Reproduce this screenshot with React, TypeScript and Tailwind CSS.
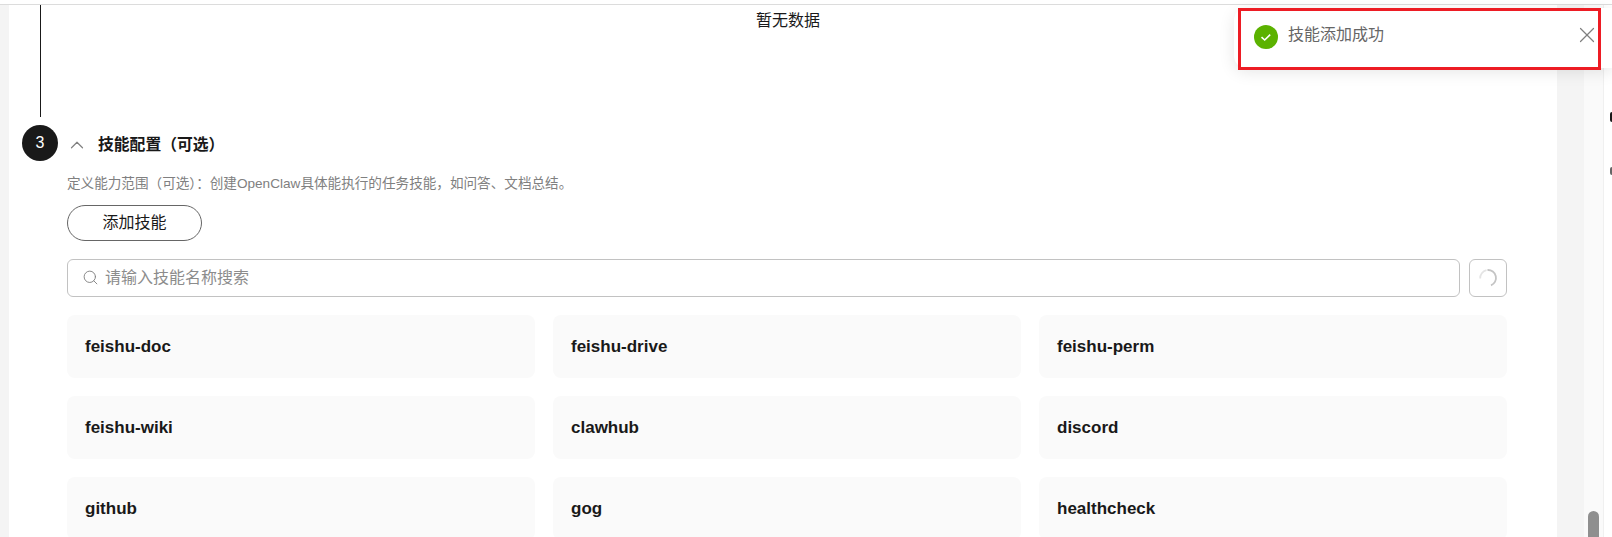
import { useState } from 'react';
import { ChevronUp, Search, X } from 'lucide-react';

const skills = [
  'feishu-doc',
  'feishu-drive',
  'feishu-perm',
  'feishu-wiki',
  'clawhub',
  'discord',
  'github',
  'gog',
  'healthcheck',
];

const Toast = ({ onClose }: { onClose: () => void }) => (
  <div className="absolute left-[1234px] top-[8px] z-10 h-[60px] w-[378px] rounded-l-xl bg-white shadow-[0_4px_16px_rgba(0,0,0,0.1)]">
    <div className="flex h-full items-start pl-[20px] pr-[12px] pt-[17px]">
      <span className="flex h-6 w-6 shrink-0 items-center justify-center rounded-full bg-[#5bb200]">
        <svg width="14" height="14" viewBox="0 0 14 14" fill="none">
          <path d="M2.5 7.2 5.7 10 11.2 4.6" stroke="#fff" strokeWidth="1.6" />
        </svg>
      </span>
      <span className="-mt-px ml-[10px] flex-1 text-[16px] leading-[22px] text-[#666]">技能添加成功</span>
      <button aria-label="关闭" onClick={onClose} className="-mt-[3px] text-[#808080]">
        <X size={26} strokeWidth={1.1} />
      </button>
    </div>
    {/* red annotation box drawn on top of the toast */}
    <div className="pointer-events-none absolute left-[4px] top-0 h-[62px] w-[363px] border-[3px] border-[#ed1c24]" />
  </div>
);

export default function App() {
  const [query, setQuery] = useState('');
  const [toastOpen, setToastOpen] = useState(true);

  return (
    <div className="relative h-[537px] w-full overflow-hidden bg-white font-['Liberation_Sans','Noto_Sans_CJK_SC',sans-serif]">
      {toastOpen && <Toast onClose={() => setToastOpen(false)} />}
      <div className="h-[5px] border-b border-[#dcdcdc]" />
      <div className="flex h-[532px]">
        <div className="w-[9px] shrink-0 bg-[#f4f4f4]" />
        <main className="relative w-[1548px] shrink-0 overflow-hidden bg-white">
          <p className="ml-[747px] h-[128px] pt-[6px] text-[16px] leading-[20px] text-[#191919]">暂无数据</p>
          <div className="absolute left-[31px] top-0 h-[112px] w-px bg-[#191919]" />
          <div className="absolute left-[13px] top-[120px] flex h-9 w-9 items-center justify-center rounded-full bg-[#191919] text-[16px] text-white">
            3
          </div>
          <section className="pl-[58px] pr-[50px]">
            <div className="flex h-6 items-center">
              <ChevronUp size={22} strokeWidth={1.3} className="-ml-px text-[#808080]" />
              <h2 className="ml-[10px] text-[15.8px] font-bold leading-6 text-[#191919]">技能配置（可选）</h2>
            </div>
            <p className="mt-[18px] text-[13.6px] leading-[18px] text-[#808080]">
              定义能力范围（可选）：创建OpenClaw具体能执行的任务技能，如问答、文档总结。
            </p>
            <button className="mt-[12px] block h-9 w-[135px] rounded-full border border-[#666] text-[16px] text-[#191919]">
              添加技能
            </button>
            <div className="mt-[18px] flex gap-[9px]">
              <label className="flex h-[38px] flex-1 items-center rounded-md border border-[#c2c2c2] pl-[14px]">
                <Search size={17} strokeWidth={1.3} className="-mt-[2px] text-[#808080]" />
                <input
                  value={query}
                  onChange={(e) => setQuery(e.target.value)}
                  placeholder="请输入技能名称搜索"
                  className="ml-[6px] flex-1 text-[16px] text-[#191919] outline-none placeholder:text-[#8c8c8c]"
                />
              </label>
              <button aria-label="刷新" className="flex h-[38px] w-[38px] items-center justify-center rounded-md border border-[#c2c2c2]">
                <svg width="20" height="20" viewBox="0 0 20 20" fill="none">
                  <path d="M2.2 10.5A8 8 0 0 1 8.5 2.2" stroke="#e4e4e4" strokeWidth="1.8" />
                  <path d="M9.5 2a8 8 0 0 1 3.5 15.4" stroke="#c4c4c4" strokeWidth="1.8" />
                </svg>
              </button>
            </div>
            <div className="mt-[18px] grid grid-cols-3 gap-x-[18px] gap-y-[18px]">
              {skills.map((name) => (
                <div key={name} className="flex h-[63px] items-center rounded-lg bg-[#fafafa] px-[18px] text-[17px] font-bold text-[#191919]">
                  {name}
                </div>
              ))}
            </div>
          </section>
        </main>
        <div className="w-[27px] shrink-0 bg-[#f4f4f4]" />
        <aside className="relative w-[19px] shrink-0 bg-[#fafafa]">
          <div className="absolute bottom-0 left-[4px] h-[26px] w-[11px] rounded-t-full bg-[#8f8f8f]" />
        </aside>
        <div className="relative flex-1 border-l border-[#f0f0f0] bg-white">
          <div className="absolute right-0 top-[107px] h-[10px] w-[2px] rounded-l-full bg-[#191919]" />
          <div className="absolute right-0 top-[162px] h-[8px] w-[2px] rounded-l-full bg-[#666]" />
        </div>
      </div>
    </div>
  );
}
